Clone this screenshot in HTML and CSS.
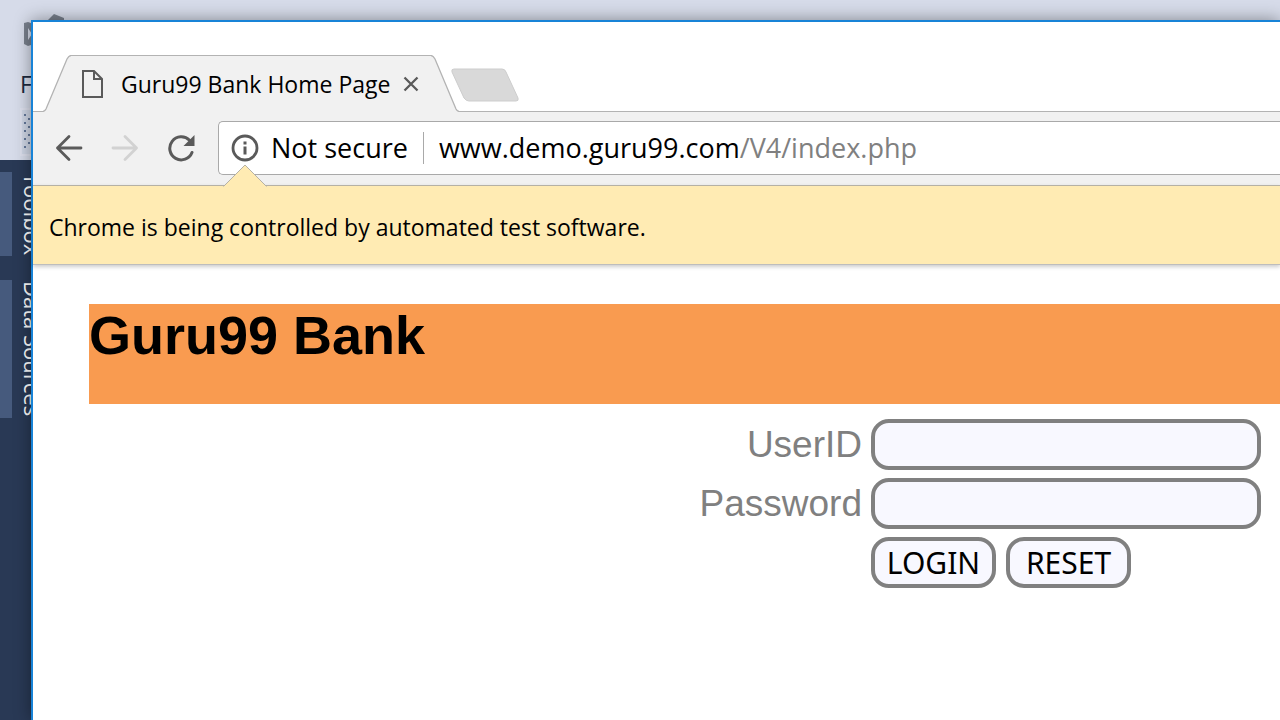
FILE: index.html
```html
<!DOCTYPE html>
<html lang="en">
<head>
<meta charset="utf-8">
<title>Guru99 Bank Home Page</title>
<link rel="stylesheet" href="styles.css">
</head>
<body>
<div class="ide">
  <header class="ide-top">
    <svg class="ide-logo" width="50" height="36" viewBox="0 0 50 36" aria-hidden="true">
      <path d="M4 11L8 10L14 12V32L8 34L4 32ZM8 16V28L12 22Z" fill="#79808d" fill-rule="evenodd"/>
      <path d="M28 8L34 2L44 6V12H28Z" fill="#79808d"/>
    </svg>
    <span class="ide-menu">F</span>
    <div class="ide-tool">
      <svg width="12" height="40" viewBox="0 0 12 40" fill="#64789a" aria-hidden="true">
        <path d="M1 2h2v2h-2zM1 10h2v2h-2zM1 18h2v2h-2zM1 26h2v2h-2zM1 34h2v2h-2zM5 6h2v2h-2zM5 14h2v2h-2zM5 22h2v2h-2zM5 30h2v2h-2z"/>
      </svg>
    </div>
  </header>
  <aside class="ide-side">
    <span class="side-tab">Toolbox</span>
    <span class="side-tab">Data Sources</span>
  </aside>
</div>

<div class="window">
  <div class="tab-strip">
    <div class="tab">
      <svg class="slope" width="28" height="57" viewBox="0 0 28 57" aria-hidden="true">
        <path d="M0 57V56.500Q2 56 3 54L24 4Q26 .5 28 .5V57Z" fill="#f1f1f1"/>
        <path d="M0 56.500Q2 56 3 54L24 4Q26 .5 28 .5" fill="none" stroke="#b3b3b3" stroke-width="1.300"/>
      </svg>
      <div class="tab-body">
        <svg width="22" height="28" viewBox="0 0 22 28" fill="none" stroke="#5a5a5a" stroke-width="2" aria-hidden="true">
          <path d="M2 1H13L21 9V27H2Z"/><path d="M13 1V9H21"/>
        </svg>
        <span class="tab-title">Guru99 Bank Home Page</span>
        <button class="icon-button" aria-label="Close tab">
          <svg width="16" height="16" viewBox="0 0 16 16" stroke="#5a5a5a" stroke-width="2.300"><path d="M1.500 1.500L14.500 14.500M14.500 1.500L1.500 14.500"/></svg>
        </button>
      </div>
      <svg class="slope" width="28" height="57" viewBox="0 0 28 57" aria-hidden="true">
        <path d="M28 57V56.500Q26 56 25 54L4 4Q2 .5 0 .5V57Z" fill="#f1f1f1"/>
        <path d="M28 56.500Q26 56 25 54L4 4Q2 .5 0 .5" fill="none" stroke="#b3b3b3" stroke-width="1.300"/>
      </svg>
    </div>
    <button class="icon-button new-tab" aria-label="New tab">
      <svg width="68" height="34" viewBox="0 0 68 34"><path d="M3 1H51Q54 1 55 4L67 30Q68 33 65 33H18Q15 33 13 30L1 4Q0 1 3 1Z" fill="#d9d9d9" stroke="#cdcdcd"/></svg>
    </button>
  </div>

  <div class="toolbar">
    <button class="icon-button" aria-label="Back">
      <svg width="28" height="28" viewBox="0 0 28 28" fill="none" stroke="#5a5a5a" stroke-width="2.800" stroke-linecap="round" stroke-linejoin="round"><path d="M26 14H2.500M14 2.500L2.500 14L14 25.500"/></svg>
    </button>
    <button class="icon-button" aria-label="Forward" disabled>
      <svg width="28" height="28" viewBox="0 0 28 28" fill="none" stroke="#d2d2d2" stroke-width="2.800" stroke-linecap="round" stroke-linejoin="round"><path d="M2 14H25.500M14 2.500L25.500 14L14 25.500"/></svg>
    </button>
    <button class="icon-button" aria-label="Reload">
      <svg width="28" height="28" viewBox="0 0 28 28"><path d="M25 18.500A11.500 11.500 0 1 1 22.500 6.300" fill="none" stroke="#5a5a5a" stroke-width="3" stroke-linecap="round"/><path d="M27.500 1V12H16.500Z" fill="#5a5a5a"/></svg>
    </button>
    <div class="address">
      <svg width="28" height="28" viewBox="0 0 28 28" aria-hidden="true"><circle cx="14" cy="14" r="12" fill="none" stroke="#5a5a5a" stroke-width="2.800"/><path d="M12.500 7.500h3v3h-3zM12.500 12.500h3v8h-3z" fill="#5a5a5a"/></svg>
      <span class="security">Not secure</span>
      <span class="url">www.demo.guru99.com<span class="path">/V4/index.php</span></span>
    </div>
  </div>

  <div class="infobar">
    <svg class="pointer" width="44" height="23" viewBox="0 0 44 23" aria-hidden="true"><path d="M1 22L22 1L43 22V23H1Z" fill="#ffebb3"/><path d="M0 22H1L22 1L43 22H44" fill="none" stroke="#b5b1a5"/></svg>
    Chrome is being controlled by automated test software.
  </div>

  <main class="page">
    <h1 class="banner">Guru99 Bank</h1>
    <form class="login">
      <label for="uid">UserID</label>
      <input class="field" id="uid" type="text">
      <label for="pwd">Password</label>
      <input class="field" id="pwd" type="password">
      <div class="actions">
        <button class="action" type="button">LOGIN</button>
        <button class="action" type="reset">RESET</button>
      </div>
    </form>
  </main>
</div>
</body>
</html>
```
FILE: styles.css
```css
* { box-sizing: border-box; }
body {
  margin: 0;
  height: 100vh;
  overflow: hidden;
  font-family: "Open Sans", "Noto Sans", sans-serif;
  font-size: 23px;
  color: #000;
}
svg { display: block; flex: none; }

.ide { height: 100vh; display: flex; flex-direction: column; background: #293955; }
.ide-top {
  height: 160px;
  flex: none;
  padding: 12px 0 0 20px;
  background: #d6dbe9;
}
.ide-menu { display: block; margin-top: 20px; line-height: 32px; color: #1b293e; }
.ide-tool {
  width: 40px;
  height: 48px;
  margin-top: 8px;
  padding: 2px 0 0 1px;
  border: 2px solid #dcdfec;
  background: #cfd6e5;
}
.ide-side {
  display: flex;
  flex-direction: column;
  align-items: flex-start;
  gap: 24px;
  padding-top: 12px;
}
.side-tab {
  writing-mode: vertical-rl;
  border-left: 12px solid #465a7d;
  padding: 1px 0 1px 5px;
  line-height: 32px;
  font-size: 22px;
  color: #fff;
}

.window {
  position: absolute;
  inset: 20px 0 0 31px;
  display: flex;
  flex-direction: column;
  background: #fff;
  border: 2px solid #1883d7;
  border-right: 0;
  border-bottom: 0;
  box-shadow: 0 0 16px rgba(0, 0, 0, .4);
}
.icon-button { padding: 0; border: 0; background: none; }

.tab-strip {
  display: flex;
  align-items: flex-start;
  height: 90px;
  padding: 33px 0 0 10px;
  border-bottom: 1px solid #b3b3b3;
}
.tab { display: flex; height: 57px; }
.tab-body {
  display: flex;
  align-items: center;
  padding: 0 12px 0 10px;
  border-top: 1px solid #b3b3b3;
  background: #f1f1f1;
}
.tab-title { margin: 0 13px 0 18px; white-space: nowrap; }
.new-tab { margin: 13px 0 0 -8px; }

.toolbar {
  display: flex;
  align-items: center;
  gap: 28px;
  height: 73px;
  padding: 0 0 2px 22px;
  background: #f1f1f1;
}
.address {
  flex: 1;
  display: flex;
  align-items: center;
  height: 54px;
  margin-left: -5px;
  padding-left: 12px;
  border: 1px solid #a9a9a9;
  border-right: 0;
  border-radius: 5px 0 0 5px;
  background: #fff;
  font-size: 27px;
  line-height: 32px;
  white-space: nowrap;
}
.security { margin-left: 12px; padding-right: 15px; border-right: 1px solid #a9a9a9; }
.url { margin-left: 15px; }
.path { color: #808080; }

.infobar {
  position: relative;
  display: flex;
  align-items: center;
  height: 80px;
  padding: 4px 16px 0;
  border-top: 1px solid #b5b1a5;
  border-bottom: 1px solid #bdbdbd;
  background: #ffebb3;
  box-shadow: 0 2px 4px rgba(0, 0, 0, .2);
}
.pointer { position: absolute; left: 190px; top: -22px; }

.page {
  flex: 1;
  padding: 39px 0 0 56px;
  font-family: "Liberation Sans", Arial, sans-serif;
}
.banner {
  height: 100px;
  margin: 0;
  background: #f99b50;
  font-size: 54px;
  line-height: 62px;
}
.login {
  display: grid;
  grid-template-columns: auto 390px;
  grid-auto-rows: 51px;
  justify-content: end;
  align-items: center;
  gap: 8px 9px;
  padding: 15px 19px 0 0;
  color: #808080;
  font-size: 37px;
  text-align: right;
}
.field, .action {
  height: 51px;
  border: 4px solid #808080;
  border-radius: 18px;
  background: #f8f8ff;
  font-family: "Noto Sans", sans-serif;
  font-size: 30px;
}
.field { width: 100%; padding: 0 12px; }
.actions { grid-column: 2; display: flex; gap: 10px; }
.action { width: 125px; padding: 0; color: #000; }
```
